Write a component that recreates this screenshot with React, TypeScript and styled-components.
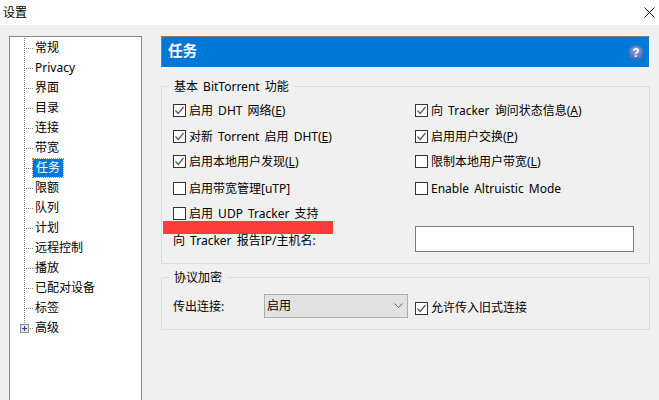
import React from "react"
import styled, { createGlobalStyle } from "styled-components"

const FONT = `"Noto Sans", "Noto Sans CJK SC", sans-serif`

const GlobalStyle = createGlobalStyle`
  html, body {
    margin: 0;
    padding: 0;
    background: #f0f0f0;
  }
  body {
    font-family: ${FONT};
    font-size: 12px;
    color: #000;
  }
`

const Window = styled.div`
  width: 659px;
  height: 400px;
  overflow: hidden;
  display: flex;
  flex-direction: column;
  background: #f0f0f0;
`

const TitleBar = styled.div`
  height: 25px;
  flex: none;
  background: #fff;
  display: flex;
  align-items: center;
  justify-content: space-between;
  padding: 0 4px 0 3px;
  line-height: 24px;
`

const Body = styled.div`
  flex: 1;
  min-height: 0;
  display: flex;
  padding: 11px 9px 0 9px;
  gap: 19px;
`

const Tree = styled.div`
  width: 133px;
  height: 400px;
  flex: none;
  box-sizing: border-box;
  background: #fff;
  border: 1px solid #828790;
  padding-top: 1px;
`

const TreeRow = styled.div`
  height: 20px;
  display: flex;
  align-items: center;
  padding-left: 14px;
`

const Guide = styled.span<{ $end?: boolean }>`
  width: 10px;
  height: 20px;
  flex: none;
  background-image:
    repeating-linear-gradient(to bottom, #808080 0 1px, transparent 1px 2px),
    repeating-linear-gradient(to right, #808080 0 1px, transparent 1px 2px);
  background-repeat: no-repeat;
  background-size: 1px ${(p) => (p.$end ? "10px" : "20px")}, 10px 1px;
  background-position: 0 0, 0 10px;
  position: relative;
`

const Expander = styled.span`
  position: absolute;
  left: -4px;
  top: 6px;
  width: 9px;
  height: 9px;
  box-sizing: border-box;
  border: 1px solid #919191;
  background: #e4e4e4;
  display: flex;
  align-items: center;
  justify-content: center;
`

const TreeLabel = styled.span<{ $selected?: boolean }>`
  margin-left: ${(p) => (p.$selected ? "-1px" : "1px")};
  padding: 0 ${(p) => (p.$selected ? "3px" : "0")};
  height: ${(p) => (p.$selected ? "18px" : "auto")};
  line-height: ${(p) => (p.$selected ? "18px" : "20px")};
  white-space: nowrap;
  color: ${(p) => (p.$selected ? "#fff" : "#000")};
  background: ${(p) => (p.$selected ? "#0078d7" : "transparent")};
  outline: ${(p) => (p.$selected ? "1px dotted #e08a1e" : "none")};
`

const Content = styled.div`
  flex: 1;
  min-width: 0;
  display: flex;
  flex-direction: column;
  word-spacing: 2px;
`

const Header = styled.div`
  height: 32px;
  box-sizing: border-box;
  background: #0078d7;
  border-top: 1px solid #808080;
  border-left: 1px solid #808080;
  border-right: 1px solid #fff;
  border-bottom: 1px solid #fff;
  display: flex;
  align-items: center;
  justify-content: space-between;
  padding: 0 5px 6px 6px;
  color: #fff;
  font-size: 14.6px;
  font-weight: 700;
`

const HelpIcon = styled.svg`
  width: 16px;
  height: 16px;
  margin-top: 8px;
`

const Group = styled.fieldset<{ $height: number; $top: number }>`
  position: relative;
  margin: ${(p) => p.$top}px 0 0;
  padding: 0;
  box-sizing: border-box;
  height: ${(p) => p.$height}px;
  border: 1px solid #dcdcdc;
  min-width: 0;
`

const Legend = styled.div`
  background: #f0f0f0;
  width: fit-content;
  margin: -9px 0 0 7px;
  padding: 0 5px;
  line-height: 17px;
  white-space: nowrap;
`

const OptionGrid = styled.div`
  display: grid;
  grid-template-columns: 242px 1fr;
  grid-auto-rows: 26px;
  padding: 0 0 0 11px;
  margin-top: 2px;
`

const Option = styled.label<{ $offset?: number }>`
  display: flex;
  align-items: center;
  gap: 3px;
  white-space: nowrap;
  line-height: 16px;
  position: relative;
  top: ${(p) => p.$offset ?? 0}px;
`

const TrailingOption = styled(Option)`
  margin-left: 7px;
`

const Box = styled.span`
  width: 13px;
  height: 13px;
  box-sizing: border-box;
  flex: none;
  background: #fff;
  border: 1px solid #333;
  display: flex;
  align-items: center;
  justify-content: center;
`

const RedBar = styled.div`
  position: absolute;
  left: 1px;
  top: 134px;
  width: 170px;
  height: 13px;
  background: #ff3b3b;
`

const HostRow = styled.div`
  display: grid;
  grid-template-columns: 242px 219px;
  align-items: center;
  padding-left: 11px;
  margin-top: -1px;
`

const TextInput = styled.div`
  height: 26px;
  box-sizing: border-box;
  background: #fff;
  border: 1px solid #7a7a7a;
`

const EncryptRow = styled.div`
  display: grid;
  grid-template-columns: 91px 144px auto;
  align-items: center;
  padding-left: 11px;
  margin-top: 8px;
`

const FieldLabel = styled.span`
  white-space: nowrap;
`

const HostLabel = styled(FieldLabel)`
  padding-top: 2px;
`

const Select = styled.div`
  height: 24px;
  box-sizing: border-box;
  background: #e1e1e1;
  border: 1px solid #adadad;
  display: flex;
  align-items: center;
  justify-content: space-between;
  padding: 0 4px 2px 2px;
`

const Key = styled.u`
  text-underline-offset: 1px;
`

const Check = ({ checked }: { checked?: boolean }) => (
  <Box>
    {checked && (
      <svg width="11" height="11" viewBox="0 0 11 11">
        <path d="M1.5 5.5 L4.2 8.5 L9.5 2" fill="none" stroke="#555" strokeWidth="1.2" />
      </svg>
    )}
  </Box>
)

const NAV = ["常规", "Privacy", "界面", "目录", "连接", "带宽", "任务", "限额", "队列", "计划", "远程控制", "播放", "已配对设备", "标签", "高级"]

const App = () => {
  return (
    <Window>
      <GlobalStyle />
      <TitleBar>
        <span>设置</span>
        <svg width="11" height="11" viewBox="0 0 11 11">
          <path d="M0.5 0.5 L10.5 10.5 M10.5 0.5 L0.5 10.5" stroke="#111" strokeWidth="1" fill="none" />
        </svg>
      </TitleBar>
      <Body>
        <Tree>
          {NAV.map((name, i) => (
            <TreeRow key={name}>
              <Guide $end={i === NAV.length - 1}>
                {i === NAV.length - 1 && (
                  <Expander>
                    <svg width="7" height="7" viewBox="0 0 7 7">
                      <path d="M1 3.5 H6 M3.5 1 V6" stroke="#1f3f9a" strokeWidth="1" fill="none" />
                    </svg>
                  </Expander>
                )}
              </Guide>
              <TreeLabel $selected={name === "任务"}>{name}</TreeLabel>
            </TreeRow>
          ))}
        </Tree>
        <Content>
          <Header>
            <span>任务</span>
            <HelpIcon viewBox="0 0 16 16">
              <defs>
                <radialGradient id="helpFill" cx="50%" cy="35%" r="70%">
                  <stop offset="0%" stopColor="#8fa8dd" />
                  <stop offset="100%" stopColor="#3459a8" />
                </radialGradient>
              </defs>
              <circle cx="8" cy="8" r="7.6" fill="url(#helpFill)" />
              <text x="8" y="12.2" textAnchor="middle" fontSize="12" fontWeight="700" fill="#fff" fontFamily="Liberation Sans, sans-serif">?</text>
            </HelpIcon>
          </Header>
          <Group $height={178} $top={18}>
            <Legend>基本 BitTorrent 功能</Legend>
            <OptionGrid>
              <Option $offset={0.5}><Check checked /><span>启用 DHT 网络(<Key>E</Key>)</span></Option>
              <Option $offset={0.5}><Check checked /><span>向 Tracker 询问状态信息(<Key>A</Key>)</span></Option>
              <Option $offset={0.5}><Check checked /><span>对新 Torrent 启用 DHT(<Key>E</Key>)</span></Option>
              <Option $offset={0.5}><Check checked /><span>启用用户交换(<Key>P</Key>)</span></Option>
              <Option $offset={-0.5}><Check checked /><span>启用本地用户发现(<Key>L</Key>)</span></Option>
              <Option $offset={-0.5}><Check /><span>限制本地用户带宽(<Key>L</Key>)</span></Option>
              <Option $offset={0.5}><Check /><span>启用带宽管理[uTP]</span></Option>
              <Option $offset={0.5}><Check /><span>Enable Altruistic Mode</span></Option>
              <Option $offset={-0.5}><Check /><span>启用 UDP Tracker 支持</span></Option>
            </OptionGrid>
            <RedBar />
            <HostRow>
              <HostLabel>向 Tracker 报告IP/主机名:</HostLabel>
              <TextInput />
            </HostRow>
          </Group>
          <Group $height={53} $top={13}>
            <Legend>协议加密</Legend>
            <EncryptRow>
              <FieldLabel>传出连接:</FieldLabel>
              <Select>
                <span>启用</span>
                <svg width="9" height="5" viewBox="0 0 9 5">
                  <path d="M0.5 0.5 L4.5 4.5 L8.5 0.5" stroke="#666" strokeWidth="1" fill="none" />
                </svg>
              </Select>
              <TrailingOption $offset={2}>
                <Check checked />
                <span>允许传入旧式连接</span>
              </TrailingOption>
            </EncryptRow>
          </Group>
        </Content>
      </Body>
    </Window>
  )
}

export default App
